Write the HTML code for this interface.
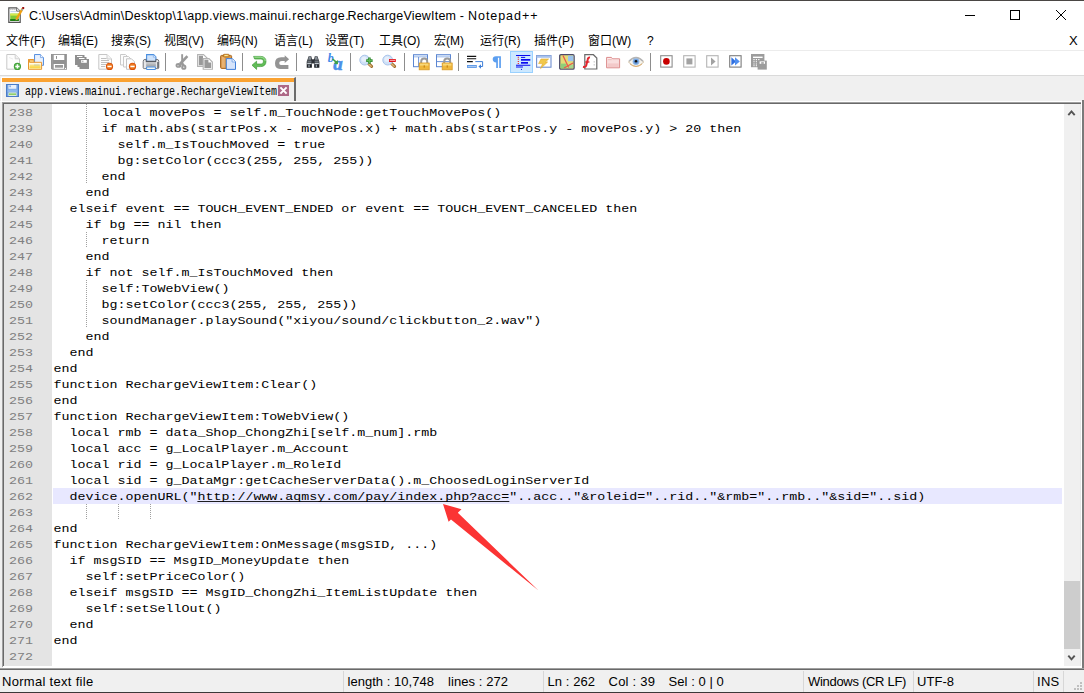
<!DOCTYPE html>
<html lang="zh">
<head>
<meta charset="utf-8">
<title>Notepad++</title>
<style>
*{box-sizing:border-box;margin:0;padding:0}
html,body{width:1084px;height:693px;overflow:hidden;background:#f0f0f0}
body{position:relative;font-family:"Liberation Sans","Noto Sans CJK SC",sans-serif;font-size:12px;color:#000}
.abs,.ic,.sep,.act{position:absolute}
#topline{left:0;top:0;width:1084px;height:1px;background:#4a4644}
#title{left:0;top:1px;width:1084px;height:29px;background:#fff}
#ttext span{position:absolute;top:0;white-space:pre}
#ttext{left:29px;top:8px;height:16px;line-height:16px;font-size:12.5px;white-space:nowrap;letter-spacing:.37px}
#menu{left:0;top:30px;width:1084px;height:20px;background:#fff}
#menu span{position:absolute;top:3px;height:16px;line-height:16px;font-size:12px;white-space:nowrap}
#mline{left:0;top:50px;width:1084px;height:1px;background:#ececec}
#tool{left:0;top:51px;width:1084px;height:24px;background:#fff}
#tline{left:0;top:75px;width:1084px;height:1px;background:#dadada}
.ic{overflow:visible}
.sep{top:53px;width:1px;height:18px;background:#8d8d8d}
.act{left:510px;top:51px;width:23px;height:22px;background:#cce8ff;border:1px solid #99d1ff}
#tabbar{left:0;top:76px;width:1084px;height:25px;background:#f0f0f0}
#tab{left:1px;top:77px;width:295px;height:24px;background:#f0f0f0;border-left:1px solid #fff;border-top:1px solid #fff;border-right:2px solid #6b6b6b}
#tabor{left:2px;top:78px;width:292px;height:4px;background:#faa231}
#tabtx{left:25px;top:86px;height:16px;line-height:16px;font-family:"Liberation Mono",monospace;font-size:10px;white-space:nowrap;transform:scaleY(1.3);transform-origin:0 12px;color:#000}
#tabx{left:278px;top:85px;width:11px;height:11px;background:#ad6886}
#edwhite{left:0;top:101px;width:1084px;height:1px;background:#fff}
#ed{left:2px;top:102px;width:1080px;height:565px;border-top:1px solid #a0a0a0;border-left:1px solid #a0a0a0;background:#696969}
#edin{left:4px;top:104px;width:1060px;height:562px;background:#fff;overflow:hidden}
#margin{left:4px;top:104px;width:48px;height:562px;background:#e4e4e4}
.ln{position:absolute;left:0;width:1060px;height:16px;line-height:16px;font-family:"Liberation Mono",monospace;font-size:13.333px;white-space:pre;color:#000}
.ln.cur::before{content:"";position:absolute;left:49px;top:0;width:1009px;height:16px;background:#e8e8ff}
.no{position:absolute;left:5px;top:1px;font-weight:normal;color:#808080;transform:scaleY(.87);transform-origin:0 12px}
.tx{position:absolute;top:1px;margin-left:-.6px;transform:scaleY(.87);transform-origin:0 12px}
.tx u{text-decoration:underline;text-underline-offset:1px;text-decoration-skip-ink:none;text-decoration-thickness:1px}
.g{position:absolute;top:0;width:1px;height:16px;background-image:linear-gradient(#a0a0a0 50%,transparent 50%);background-size:1px 2px}
#sb{left:1064px;top:104px;width:17px;height:562px;background:#f0f0f0}
#thumb{left:1064px;top:581px;width:16px;height:68px;background:#cdcdcd}
#status{left:0;top:669px;width:1084px;height:24px;background:#f0f0f0;border-top:1px solid #696969}
.st{position:absolute;top:674px;height:16px;line-height:16px;font-size:13px;letter-spacing:.3px;white-space:nowrap}
.ss{position:absolute;top:671px;width:1px;height:21px;background:#d7d7d7}
#botline{left:0;top:692px;width:1084px;height:1px;background:#3c3838}
</style>
</head>
<body>
<div id="topline" class="abs"></div>
<div id="title" class="abs"></div>
<svg class="abs" style="left:8px;top:6px" width="17" height="18" viewBox="0 0 17 18"><path d="M.8 1.8H8.6L12.2 5.2V16.4H.8Z" fill="#fff" stroke="#555" stroke-width="1.2"/><path d="M8.6 1.8V5.2H12.2" fill="#eee" stroke="#666" stroke-width=".9"/><path d="M2.4 3.6H7.4" stroke="#999" stroke-width="1" stroke-dasharray="1 1"/><path d="M2.4 5.6H8" stroke="#b9cbe6" stroke-width=".9"/><rect x="2.2" y="7.6" width="8.6" height="7.4" fill="#7fc93a"/><rect x="2.2" y="7.6" width="8.6" height="2" fill="#d6e84c"/><rect x="2.2" y="13" width="8.6" height="2" fill="#1f7d14"/><path d="M14.6 2.6L8.2 13.6" stroke="#f0a010" stroke-width="2.2"/><path d="M7.6 14.6L8 12.6L9.6 13.4Z" fill="#c9a36a"/><rect x="14.2" y="1" width="2" height="2" fill="#9b1010"/><path d="M13.6 3.4L14.8 4.2" stroke="#7fa8e0" stroke-width="1.4"/></svg>
<div id="ttext" class="abs"><span style="letter-spacing:.3px">C:\Users\Admin\Desktop\1\app.views.mainui.</span><span style="left:263.3px;letter-spacing:.45px">recharge.</span><span style="left:318.6px;letter-spacing:.2px">RechargeViewItem</span><span style="left:427px"> - </span><span style="left:439px;letter-spacing:.95px">Notepad++</span></div>
<svg class="abs" style="left:960px;top:5px" width="112" height="20" viewBox="0 0 112 20"><path d="M5 10.5H15" stroke="#000" stroke-width="1"/><rect x="50.5" y="5.5" width="9" height="9" fill="none" stroke="#000" stroke-width="1"/><path d="M96 5L106 15M106 5L96 15" stroke="#000" stroke-width="1"/></svg>
<div id="menu" class="abs"><span style="left:6px">文件(F)</span><span style="left:58px">编辑(E)</span><span style="left:111px">搜索(S)</span><span style="left:164px">视图(V)</span><span style="left:217px">编码(N)</span><span style="left:274px">语言(L)</span><span style="left:325px">设置(T)</span><span style="left:379px">工具(O)</span><span style="left:434px">宏(M)</span><span style="left:480px">运行(R)</span><span style="left:534px">插件(P)</span><span style="left:588px">窗口(W)</span><span style="left:647px">?</span><span style="left:1069px;font-size:13px">X</span></div>
<div id="mline" class="abs"></div>
<div id="tool" class="abs"></div>
<div id="tline" class="abs"></div>
<div class="act"></div><i class="sep" style="left:165px"></i><i class="sep" style="left:242px"></i><i class="sep" style="left:296px"></i><i class="sep" style="left:350px"></i><i class="sep" style="left:404px"></i><i class="sep" style="left:458px"></i><i class="sep" style="left:650px"></i><svg class="ic" style="left:5px;top:54px" width="16" height="16" viewBox="0 0 16 16"><path d="M1.8 .5H10.2L14.5 4.8V15.2H1.8Z" fill="#fdfdfd" stroke="#c9c9c9"/><path d="M10.2 .5V4.8H14.5" fill="#f1f1f1" stroke="#d2d2d2"/><path d="M4 3.5L8 5" stroke="#ececec"/><circle cx="12.4" cy="12.4" r="3.6" fill="#3d9b35"/><circle cx="12.4" cy="12.4" r="2.8" fill="#55b54a"/><path d="M12.4 10.3V14.5M10.3 12.4H14.5" stroke="#fff" stroke-width="1.5"/></svg>
<svg class="ic" style="left:28px;top:54px" width="16" height="16" viewBox="0 0 16 16"><path d="M6.5 .5H12.5L15.5 3.5V11.3H6.5Z" fill="#dbe8fb" stroke="#5b92e0"/><path d="M12.5 .5V3.5H15.5" fill="#f1f6fe" stroke="#7aa6e6" stroke-width=".8"/><path d="M7.6 1.6H11.6V4.4H14.4V10.2H7.6Z" fill="#e9f1fd"/><path d="M.5 5.5H5.8V9H.5Z" fill="#fbdc90" stroke="#e8962e"/><path d="M.5 15.3V5.5H1.5V8.3H13.6V15.3Z" fill="#fffae6" stroke="#e8962e"/><path d="M1.8 7L4.8 6.6L5.6 7.8" fill="none" stroke="#f3b65a" stroke-width="1"/><rect x="1.6" y="10.6" width="10.9" height="3.8" fill="#fbe27a"/><rect x="1.6" y="12.4" width="10.9" height="2" fill="#f9d84e"/><path d="M6 11H11.5" stroke="#b9c6a8" stroke-width=".8"/></svg>
<svg class="ic" style="left:51px;top:54px" width="16" height="16" viewBox="0 0 16 16"><path d="M0 0H15.9V15.7H1.2L0 14.8Z" fill="#929292"/><path d="M1.3 .2V14.6" stroke="#a8a8a8" stroke-width=".5"/><rect x="2.7" y=".9" width="10.6" height="5.1" fill="#fff"/><rect x="5" y="2" width="1" height="2.9" fill="#929292"/><rect x="2.7" y="10" width="10.4" height="4.8" fill="#fff"/><rect x="4" y="11" width="8" height="2.7" fill="#9a9a9a"/><rect x="14" y="13.9" width="1" height="1.1" fill="#fff"/></svg>
<svg class="ic" style="left:74px;top:54px" width="16" height="16" viewBox="0 0 16 16"><path d="M1 1H10.5V3H12.5V5H15V15H5.5V13H3.5V11H1Z" fill="#8f8f8f"/><rect x="3" y="2" width="5.5" height="1" fill="#fff"/><rect x="5" y="4" width="5.5" height="1" fill="#fff"/><rect x="7.2" y="6" width="5.6" height="2.8" fill="#fff"/><rect x="8.4" y="6.6" width=".9" height="1.6" fill="#8f8f8f"/></svg>
<svg class="ic" style="left:97px;top:54px" width="16" height="16" viewBox="0 0 16 16"><path d="M1.8 .5H10L14.5 5V15.2H1.8Z" fill="#fdfdfd" stroke="#c6c6c6"/><path d="M10 .5V5H14.5" fill="#f4f4f4" stroke="#cfcfcf"/><path d="M4 4.5H9.5M4 6.5H12M4 8.5H12M4 10.5H9M4 12.5H8" stroke="#b9b9b9" stroke-width=".9"/><circle cx="12.5" cy="12.4" r="3.6" fill="#d8500b"/><circle cx="12.5" cy="12.2" r="2.7" fill="#ee7a1f"/><rect x="10.4" y="11.7" width="4.2" height="1.5" fill="#fff"/></svg>
<svg class="ic" style="left:120px;top:54px" width="16" height="16" viewBox="0 0 16 16"><path d="M.5 .5H5.5L8 3V11H.5Z" fill="#fcfcfc" stroke="#cacaca"/><path d="M3.5 2.5H8.5L11 5V13H3.5Z" fill="#fcfcfc" stroke="#cacaca"/><path d="M6.5 4.8H11.5L14.5 7.8V15.3H6.5Z" fill="#fcfcfc" stroke="#c4c4c4"/><circle cx="12.5" cy="12.4" r="3.6" fill="#d8500b"/><circle cx="12.5" cy="12.2" r="2.7" fill="#ee7a1f"/><rect x="10.4" y="11.7" width="4.2" height="1.5" fill="#fff"/></svg>
<svg class="ic" style="left:143px;top:54px" width="16" height="16" viewBox="0 0 16 16"><path d="M3.6 .6H10.6L12.9 3V8H3.6Z" fill="#cfe3fb" stroke="#4a8fe0" stroke-width="1.1"/><path d="M10.4 .7V3.2H12.8" fill="#eef5fe" stroke="#7aa9e6" stroke-width=".7"/><path d="M2 5.4H3.1V7.2H12.9V5.4H14Q15.8 5.4 15.8 7.5V13.6Q15.8 14.6 14.8 14.6H1.2Q.2 14.6 .2 13.6V7.5Q.2 5.4 2 5.4Z" fill="#e6e7e9" stroke="#55585e" stroke-width=".8"/><path d="M2.8 7.7H13.2" stroke="#4a4d52" stroke-width="1"/><rect x="3.2" y="8.3" width="9.6" height="4.4" fill="#c2c4c7"/><rect x="3.2" y="10.4" width="9.6" height="2.3" fill="#a9acb0"/><path d="M14.9 8V14" stroke="#2e3034" stroke-width=".9"/><path d="M3.6 13H12.4V15.5H3.6Z" fill="#f4f9f6" stroke="#4a8fe0" stroke-width="1"/></svg>
<svg class="ic" style="left:174px;top:54px" width="16" height="16" viewBox="0 0 16 16"><path d="M7.2 .2H9.1V10H7.2Z" fill="#999"/><path d="M13.4 2.2L6 10" stroke="#999" stroke-width="2.6"/><ellipse cx="4.5" cy="11.4" rx="2.9" ry="2.4" fill="#999"/><circle cx="4" cy="11.7" r=".6" fill="#e6e6e6"/><path d="M7.4 8.6L9.6 11.8" stroke="#999" stroke-width="2.6"/><circle cx="9.8" cy="13.2" r="1.6" fill="#fff" stroke="#999" stroke-width="2"/></svg>
<svg class="ic" style="left:197px;top:54px" width="16" height="16" viewBox="0 0 16 16"><path d="M.6 .6H6.5L10.6 4.5V12.4H.6Z" fill="#fff" stroke="#b3b3b3" stroke-width="1.1"/><path d="M1.8 1.8H6V5H9.4V11.2H1.8Z" fill="#999"/><path d="M6.2 4.6H12L15.4 8V15.2H6.2Z" fill="#fff" stroke="#b3b3b3" stroke-width="1.1"/><path d="M7.4 5.8H11.4V8.6H14.2V14H7.4Z" fill="#999"/></svg>
<svg class="ic" style="left:220px;top:54px" width="16" height="16" viewBox="0 0 16 16"><rect x=".6" y="1.4" width="11" height="13" rx="1" fill="#d99a4e" stroke="#a9651c" stroke-width="1"/><rect x="1.8" y="3" width="3" height="10.6" fill="#e8b272"/><rect x="3.4" y=".3" width="5.6" height="2.6" rx=".6" fill="#f2c14e" stroke="#a9651c" stroke-width=".8"/><rect x="4.8" y="1" width="2.8" height="1" fill="#fbe7a0"/><path d="M6.3 4.6H12.3L15.5 7.8V15.4H6.3Z" fill="#d6e4fb" stroke="#3f7fd8" stroke-width="1"/><path d="M12.1 4.8V8H15.4" fill="#f1f6fe" stroke="#6f9fe3" stroke-width=".8"/></svg>
<svg class="ic" style="left:251px;top:54px" width="16" height="16" viewBox="0 0 16 16"><path d="M2.6 2.4H9.6C13.2 2.4 15 4.4 15 7.4C15 10.4 13.2 12.6 9.6 12.6H5.6V15.4L1 11.2L5.6 7.2V10H9.6C11.4 10 12.4 9 12.4 7.4C12.4 5.8 11.4 5 9.6 5H3.6Z" fill="#62bd57" stroke="#3f9c3b" stroke-width=".7"/><path d="M3.4 3.2H9.6C12.6 3.2 14 4.8 14.2 7" fill="none" stroke="#b2e6a8" stroke-width=".8"/></svg>
<svg class="ic" style="left:274px;top:54px" width="16" height="16" viewBox="0 0 16 16"><path d="M10.7 1.3L15.1 5.2L10.7 9.1V7.1H7.8Q5.2 7.1 5.2 9.1Q5.2 11 7 11H14.4V14.9H6Q1 14.9 1 9.3Q1 3.3 7.2 3.3H10.7Z" fill="#949494"/></svg>
<svg class="ic" style="left:305px;top:54px" width="16" height="16" viewBox="0 0 16 16"><g transform="translate(1,.2) scale(.88,1)"><path d="M3 2H6L6.8 5H9.2L10 2H13L15.2 7.6V13.6H9.3V9.2H6.7V13.6H.8V7.6Z" fill="#2c3035"/><path d="M3.4 2.4H5.4L5.9 5.6H2.4Z" fill="#8a9199"/><path d="M10.6 2.4H12.6L13.6 5.6H10.1Z" fill="#8a9199"/><path d="M1.6 6.4H6.2V8H1.6ZM9.8 6.4H14.4V8H9.8Z" fill="#6c737b"/><rect x="1.4" y="8.6" width="4.8" height="1.4" fill="#c3cad1"/><rect x="9.8" y="8.6" width="4.8" height="1.4" fill="#c3cad1"/><rect x="1.6" y="10.4" width="4.4" height="2.6" fill="#1d2024"/><rect x="10" y="10.4" width="4.4" height="2.6" fill="#1d2024"/><rect x="2.6" y="10.4" width="1.6" height="2.6" fill="#8d97a1"/><rect x="11" y="10.4" width="1.6" height="2.6" fill="#8d97a1"/></g></svg>
<svg class="ic" style="left:328px;top:54px" width="16" height="16" viewBox="0 0 16 16"><text x="-.2" y="8.2" font-family="Liberation Serif,serif" font-style="italic" font-weight="bold" font-size="12" fill="#3f88e8">b</text><text x="5.2" y="15.6" font-family="Liberation Serif,serif" font-style="italic" font-weight="bold" font-size="19" fill="#4a90e8" stroke="#4a90e8" stroke-width=".5">a</text><path d="M4.6 5L8.2 8.2" stroke="#3fa046" stroke-width="1.6"/><path d="M9.8 6L10 10.2L5.6 9.6Z" fill="#3fa046"/></svg>
<svg class="ic" style="left:359px;top:54px" width="16" height="16" viewBox="0 0 16 16"><path d="M8.6 8.6L12.6 12.4" stroke="#a06e2e" stroke-width="3" stroke-linecap="round"/><path d="M9.6 9.8L12.2 12.2" stroke="#e0b878" stroke-width="1.3" stroke-linecap="round"/><circle cx="5.7" cy="6.1" r="4.9" fill="#cfe0f7" stroke="#a9c4ea" stroke-width="1"/><circle cx="5" cy="5.2" r="2.6" fill="#e6effb"/><path d="M10.4 3.4V9.8M7.2 6.6H13.6" stroke="#2f8b2f" stroke-width="2.6"/><path d="M10.4 4.2V9M8 6.6H12.8" stroke="#63b85a" stroke-width="1.2"/></svg>
<svg class="ic" style="left:382px;top:54px" width="16" height="16" viewBox="0 0 16 16"><path d="M8.6 8.6L12.6 12.4" stroke="#a06e2e" stroke-width="3" stroke-linecap="round"/><path d="M9.6 9.8L12.2 12.2" stroke="#e0b878" stroke-width="1.3" stroke-linecap="round"/><circle cx="5.7" cy="6.1" r="4.9" fill="#cfe0f7" stroke="#a9c4ea" stroke-width="1"/><circle cx="5" cy="5.2" r="2.6" fill="#e6effb"/><rect x="7" y="5" width="6.8" height="3" fill="#e3141c"/><rect x="7.8" y="5.8" width="5.2" height="1.2" fill="#f59a9e"/></svg>
<svg class="ic" style="left:413px;top:54px" width="16" height="16" viewBox="0 0 16 16"><rect x=".5" y=".7" width="14" height="12" fill="#fff" stroke="#5b86d2" stroke-width="1"/><rect x="1" y="1.2" width="13" height="1.6" fill="#c4d6f3"/><path d="M1 3H14" stroke="#8fb0e6" stroke-width=".6"/><path d="M5.6 3V12.5" stroke="#5b86d2" stroke-width=".9"/><path d="M8.2 9.5V7.6Q8.2 4.6 11.2 4.6Q14.2 4.6 14.2 7.6V9.5" fill="none" stroke="#9b9b9b" stroke-width="2"/><rect x="6.2" y="9" width="10" height="6.8" fill="#f0b73c" stroke="#d99a26" stroke-width=".8"/><rect x="7" y="9.6" width="8.4" height="2" fill="#f9d777"/><rect x="10.6" y="11.4" width="1.4" height="2.2" fill="#c98a1c"/></svg>
<svg class="ic" style="left:436px;top:54px" width="16" height="16" viewBox="0 0 16 16"><rect x=".5" y=".7" width="14" height="12" fill="#fff" stroke="#5b86d2" stroke-width="1"/><rect x="1" y="1.2" width="13" height="1.6" fill="#c4d6f3"/><path d="M1 3H14" stroke="#8fb0e6" stroke-width=".6"/><path d="M1 7.6H14" stroke="#5b86d2" stroke-width=".9"/><path d="M8.2 9.5V7.6Q8.2 4.6 11.2 4.6Q14.2 4.6 14.2 7.6V9.5" fill="none" stroke="#9b9b9b" stroke-width="2"/><rect x="6.2" y="9" width="10" height="6.8" fill="#f0b73c" stroke="#d99a26" stroke-width=".8"/><rect x="7" y="9.6" width="8.4" height="2" fill="#f9d777"/><rect x="10.6" y="11.4" width="1.4" height="2.2" fill="#c98a1c"/></svg>
<svg class="ic" style="left:467px;top:54px" width="16" height="16" viewBox="0 0 16 16"><path d="M0 2.4H9.2M0 4.8H9.2M0 7.6H5.8" stroke="#111" stroke-width="1.1"/><rect x="0" y="11" width="9.8" height="2.9" fill="#5b97e6"/><rect x=".8" y="11.9" width="8.2" height="1.1" fill="#a9c8f3"/><path d="M8.3 7.6H15.6V12.5H13.6" fill="none" stroke="#3f7fd8" stroke-width="1"/><path d="M11.4 12.5L14 10.3V14.7Z" fill="#3f7fd8"/></svg>
<svg class="ic" style="left:490px;top:54px" width="16" height="16" viewBox="0 0 16 16"><path d="M6 2.3H10.9V13.9H9.2V3.7H7.9V13.9H6.2V8.4Q2.7 8.4 2.7 5.3Q2.7 2.3 6 2.3Z" fill="#5c9ff0"/></svg>
<svg class="ic" style="left:513px;top:53px" width="16" height="16" viewBox="0 0 16 16"><path d="M3 2.5H17.3M3 12.2H17.3M3 14H9.9" stroke="#0a0af0" stroke-width="1.1"/><path d="M8 4.4H12.2" stroke="#0a0af0" stroke-width="1"/><rect x="8" y="6" width="9.3" height="1.7" fill="#0a0af0"/><rect x="8" y="9" width="7" height="1.7" fill="#0a0af0"/><path d="M5.3 3.7V11" stroke="#f01414" stroke-width="1.1" stroke-dasharray="1 1.1"/><rect x="8" y="15.9" width="1" height="1" fill="#0a0af0"/></svg>
<svg class="ic" style="left:536px;top:54px" width="16" height="16" viewBox="0 0 16 16"><rect x=".6" y="1.6" width="14.4" height="11.6" fill="#fff" stroke="#6f8fd0" stroke-width="1.1"/><rect x=".6" y="1.6" width="14.4" height="2.2" fill="#a9c2ec"/><path d="M5 5H12.6L9.4 8H11.6L4.6 14.6L6.6 9.6H2.6Z" fill="#f2c84a" stroke="#e0a92a" stroke-width=".6"/></svg>
<svg class="ic" style="left:559px;top:54px" width="16" height="16" viewBox="0 0 16 16"><rect x=".7" y=".7" width="14.4" height="14.4" rx="1.2" fill="#e3dc78" stroke="#4c4a6a" stroke-width="1.3"/><rect x="9" y="1.6" width="5.4" height="5.6" fill="#9cc3ee"/><rect x="1.6" y="9.6" width="6" height="4.8" fill="#8fcf7a"/><rect x="8.6" y="10.6" width="5.6" height="3.6" fill="#a9d88e"/><path d="M4 1.6L9.6 13.6M14 9L5 14" stroke="#ec5a4a" stroke-width="1.3"/></svg>
<svg class="ic" style="left:582px;top:54px" width="16" height="16" viewBox="0 0 16 16"><path d="M2.8 .7H11.4L14.8 4V15H2.8Z" fill="#fff" stroke="#6a6a6a" stroke-width="1.2"/><path d="M12.2 7V13" stroke="#c5c5c5" stroke-width="1" stroke-dasharray="1.6 1.4"/><path d="M8 3.6Q6 3.2 5.6 6L4.2 11.6Q3.8 13.4 1 12.8" fill="none" stroke="#e3262e" stroke-width="2"/><path d="M3.2 8H7.4" stroke="#e3262e" stroke-width="1.4"/></svg>
<svg class="ic" style="left:605px;top:54px" width="16" height="16" viewBox="0 0 16 16"><path d="M1.6 3.4H6.4L7.4 4.8H14.6V13.8H1.6Z" fill="#fbeaea" stroke="#dc8a8a" stroke-width="1"/><path d="M2.4 6.6H13.8V13H2.4Z" fill="#f3c9c9"/><path d="M2.4 6.6H13.8V9.4H2.4Z" fill="#f9dede"/><path d="M2.8 5.6H6.8" stroke="#eeb0b0" stroke-width=".8"/></svg>
<svg class="ic" style="left:628px;top:54px" width="16" height="16" viewBox="0 0 16 16"><path d="M.4 8Q8 -1 15.8 8Q8 16.6 .4 8Z" fill="#f6f4ee" stroke="#d3c3a8" stroke-width="1"/><path d="M1 7.2Q8 -.4 15 7.2" fill="none" stroke="#b5b5b5" stroke-width="1.5"/><circle cx="8" cy="7.6" r="3.4" fill="#8ab4e6"/><circle cx="8" cy="7.6" r="2.3" fill="#5f93d6"/><circle cx="8" cy="7.2" r="1.2" fill="#111"/><path d="M2 10Q8 15.2 14 10" fill="none" stroke="#dcae72" stroke-width=".9"/></svg>
<svg class="ic" style="left:659px;top:54px" width="16" height="16" viewBox="0 0 16 16"><rect x="1.7" y="1.7" width="11.4" height="11.4" fill="#fff" stroke="#8e8e8e" stroke-width="1.1"/><circle cx="7.4" cy="7.4" r="3.3" fill="#c80000"/></svg>
<svg class="ic" style="left:682px;top:54px" width="16" height="16" viewBox="0 0 16 16"><rect x="1.7" y="1.7" width="11.4" height="11.4" fill="#fff" stroke="#b5b5b5" stroke-width="1.1"/><rect x="4.4" y="4.4" width="6" height="6" fill="#a2a2a2"/></svg>
<svg class="ic" style="left:705px;top:54px" width="16" height="16" viewBox="0 0 16 16"><rect x="1.7" y="1.7" width="11.4" height="11.4" fill="#fff" stroke="#b5b5b5" stroke-width="1.1"/><path d="M6 3.4L10.6 7.4L6 11.4Z" fill="#a2a2a2"/></svg>
<svg class="ic" style="left:728px;top:54px" width="16" height="16" viewBox="0 0 16 16"><rect x="1.7" y="1.7" width="11.4" height="11.4" fill="#fff" stroke="#7c7c7c" stroke-width="1.1"/><path d="M3.4 3.2L8 7.4L3.4 11.6Z" fill="#2f6fe0"/><path d="M7 3.2L11.8 7.4L7 11.6Z" fill="#4f8ff0"/></svg>
<svg class="ic" style="left:751px;top:54px" width="16" height="16" viewBox="0 0 16 16"><rect x="0" y="0" width="13.4" height="13.2" fill="#9c9c9c"/><rect x="2" y="2.6" width="9.6" height="1.4" fill="#fff"/><path d="M2.4 5.6H3.6M4.8 5.6H6M7.2 5.6H8.4M2.4 7.8H3.6M4.8 7.8H6M2.4 10H3.6M4.8 10H6M2.4 11.8H3.6M4.8 11.8H6" stroke="#fff" stroke-width="1.1"/><rect x="6.6" y="6.6" width="9.2" height="9" fill="#9c9c9c"/><rect x="8.6" y="7.4" width="5.4" height="2.4" fill="#fff"/><rect x="10.2" y="8.2" width="2.6" height="1.6" fill="#9c9c9c"/></svg>
<div id="tabbar" class="abs"></div>
<div id="tab" class="abs"></div>
<div id="tabor" class="abs"></div>
<svg class="abs" style="left:6px;top:84px" width="13" height="13" viewBox="0 0 13 13"><rect x=".5" y=".5" width="12" height="12" fill="#6f9fe0" stroke="#4a7cc7"/><rect x="2.4" y="1" width="8" height="3.8" fill="#e8f0fb"/><rect x="3.6" y="1.4" width="1" height="1.8" fill="#4f86d6"/><rect x="1.6" y="5.4" width="9.8" height="2.6" fill="#8fb8ee"/><rect x="2.4" y="8.4" width="8.2" height="3.6" fill="#dfeeda"/><rect x="3" y="9.4" width="7" height="1.6" fill="#8fcf6a"/></svg>
<div id="tabtx" class="abs">app.views.mainui.recharge.RechargeViewItem</div>
<div id="tabx" class="abs"><svg width="11" height="11" viewBox="0 0 11 11" style="display:block"><path d="M2.4 2.4L8.6 8.6M8.6 2.4L2.4 8.6" stroke="#fff" stroke-width="2"/></svg></div>
<div id="edwhite" class="abs"></div>
<div id="ed" class="abs"></div>
<div id="edin" class="abs">
<div class="abs" style="left:0;top:0;width:48px;height:562px;background:#e4e4e4"></div>
<div class="ln" style="top:0px"><b class="no">238</b><i class="g" style="left:82px"></i><span class="tx" style="left:98px">local movePos = self.m_TouchNode:getTouchMovePos()</span></div>
<div class="ln" style="top:16px"><b class="no">239</b><i class="g" style="left:82px"></i><span class="tx" style="left:98px">if math.abs(startPos.x - movePos.x) + math.abs(startPos.y - movePos.y) &gt; 20 then</span></div>
<div class="ln" style="top:32px"><b class="no">240</b><i class="g" style="left:82px"></i><span class="tx" style="left:114px">self.m_IsTouchMoved = true</span></div>
<div class="ln" style="top:48px"><b class="no">241</b><i class="g" style="left:82px"></i><span class="tx" style="left:114px">bg:setColor(ccc3(255, 255, 255))</span></div>
<div class="ln" style="top:64px"><b class="no">242</b><i class="g" style="left:82px"></i><span class="tx" style="left:98px">end</span></div>
<div class="ln" style="top:80px"><b class="no">243</b><span class="tx" style="left:82px">end</span></div>
<div class="ln" style="top:96px"><b class="no">244</b><span class="tx" style="left:66px">elseif event == TOUCH_EVENT_ENDED or event == TOUCH_EVENT_CANCELED then</span></div>
<div class="ln" style="top:112px"><b class="no">245</b><span class="tx" style="left:82px">if bg == nil then</span></div>
<div class="ln" style="top:128px"><b class="no">246</b><i class="g" style="left:82px"></i><span class="tx" style="left:98px">return</span></div>
<div class="ln" style="top:144px"><b class="no">247</b><span class="tx" style="left:82px">end</span></div>
<div class="ln" style="top:160px"><b class="no">248</b><span class="tx" style="left:82px">if not self.m_IsTouchMoved then</span></div>
<div class="ln" style="top:176px"><b class="no">249</b><i class="g" style="left:82px"></i><span class="tx" style="left:98px">self:ToWebView()</span></div>
<div class="ln" style="top:192px"><b class="no">250</b><i class="g" style="left:82px"></i><span class="tx" style="left:98px">bg:setColor(ccc3(255, 255, 255))</span></div>
<div class="ln" style="top:208px"><b class="no">251</b><i class="g" style="left:82px"></i><span class="tx" style="left:98px">soundManager.playSound(&quot;xiyou/sound/clickbutton_2.wav&quot;)</span></div>
<div class="ln" style="top:224px"><b class="no">252</b><span class="tx" style="left:82px">end</span></div>
<div class="ln" style="top:240px"><b class="no">253</b><span class="tx" style="left:66px">end</span></div>
<div class="ln" style="top:256px"><b class="no">254</b><span class="tx" style="left:50px">end</span></div>
<div class="ln" style="top:272px"><b class="no">255</b><span class="tx" style="left:50px">function RechargeViewItem:Clear()</span></div>
<div class="ln" style="top:288px"><b class="no">256</b><span class="tx" style="left:50px">end</span></div>
<div class="ln" style="top:304px"><b class="no">257</b><span class="tx" style="left:50px">function RechargeViewItem:ToWebView()</span></div>
<div class="ln" style="top:320px"><b class="no">258</b><span class="tx" style="left:66px">local rmb = data_Shop_ChongZhi[self.m_num].rmb</span></div>
<div class="ln" style="top:336px"><b class="no">259</b><span class="tx" style="left:66px">local acc = g_LocalPlayer.m_Account</span></div>
<div class="ln" style="top:352px"><b class="no">260</b><span class="tx" style="left:66px">local rid = g_LocalPlayer.m_RoleId</span></div>
<div class="ln" style="top:368px"><b class="no">261</b><span class="tx" style="left:66px">local sid = g_DataMgr:getCacheServerData().m_ChoosedLoginServerId</span></div>
<div class="ln cur" style="top:384px"><b class="no">262</b><span class="tx" style="left:66px">device.openURL(&quot;<u>http://www.aqmsy.com/pay/index.php?acc=</u>&quot;..acc..&quot;&amp;roleid=&quot;..rid..&quot;&amp;rmb=&quot;..rmb..&quot;&amp;sid=&quot;..sid)</span></div>
<div class="ln" style="top:400px"><b class="no">263</b><i class="g" style="left:82px"></i><i class="g" style="left:114px"></i><i class="g" style="left:146px"></i><span class="tx" style="left:50px"></span></div>
<div class="ln" style="top:416px"><b class="no">264</b><span class="tx" style="left:50px">end</span></div>
<div class="ln" style="top:432px"><b class="no">265</b><span class="tx" style="left:50px">function RechargeViewItem:OnMessage(msgSID, ...)</span></div>
<div class="ln" style="top:448px"><b class="no">266</b><span class="tx" style="left:66px">if msgSID == MsgID_MoneyUpdate then</span></div>
<div class="ln" style="top:464px"><b class="no">267</b><span class="tx" style="left:82px">self:setPriceColor()</span></div>
<div class="ln" style="top:480px"><b class="no">268</b><span class="tx" style="left:66px">elseif msgSID == MsgID_ChongZhi_ItemListUpdate then</span></div>
<div class="ln" style="top:496px"><b class="no">269</b><span class="tx" style="left:82px">self:setSellOut()</span></div>
<div class="ln" style="top:512px"><b class="no">270</b><span class="tx" style="left:66px">end</span></div>
<div class="ln" style="top:528px"><b class="no">271</b><span class="tx" style="left:50px">end</span></div>
<div class="ln" style="top:544px"><b class="no">272</b><span class="tx" style="left:50px"></span></div>
</div>
<div id="sb" class="abs"></div>
<div id="thumb" class="abs"></div>
<svg class="abs" style="left:1064px;top:104px" width="16" height="17" viewBox="0 0 16 17"><path d="M4.3 11.2L7.5 7.4L10.7 11.2" fill="none" stroke="#555" stroke-width="1.9"/></svg>
<svg class="abs" style="left:1064px;top:649px" width="16" height="17" viewBox="0 0 16 17"><path d="M4.3 6.6L7.5 10.4L10.7 6.6" fill="none" stroke="#555" stroke-width="1.9"/></svg>
<div class="abs" style="left:1080px;top:104px;width:1px;height:562px;background:#e6e6e6"></div><div class="abs" style="left:1081px;top:102px;width:1px;height:566px;background:#fff"></div>
<div class="abs" style="left:1082px;top:100px;width:2px;height:568px;background:#7a7a7a"></div>
<div class="abs" style="left:3px;top:666px;width:1079px;height:2px;background:#fff"></div>
<div class="abs" style="left:0;top:668px;width:1084px;height:1px;background:#a0a0a0"></div>
<svg class="abs" style="left:430px;top:498px" width="120" height="100" viewBox="430 498 120 100"><path d="M443 504L461.5 509.3L457.8 512.8L538.5 590.5L451 519.6L448.6 521.8Z" fill="#fb3434"/></svg>
<div id="status" class="abs"></div>
<span class="st" style="left:2px">Normal text file</span>
<span class="st" style="left:347.5px;letter-spacing:.03px">length : 10,748</span><span class="st" style="left:448px;letter-spacing:.08px">lines : 272</span>
<span class="st" style="left:547.5px;letter-spacing:.08px">Ln : 262</span><span class="st" style="left:608.5px;letter-spacing:.25px">Col : 39</span><span class="st" style="left:668.5px;letter-spacing:.06px">Sel : 0 | 0</span>
<span class="st" style="left:808px;letter-spacing:-.3px">Windows (CR LF)</span>
<span class="st" style="left:917px;letter-spacing:.06px">UTF-8</span>
<span class="st" style="left:1037px;letter-spacing:.3px">INS</span>
<i class="ss" style="left:343px"></i><i class="ss" style="left:543px"></i><i class="ss" style="left:803px"></i><i class="ss" style="left:913px"></i><i class="ss" style="left:1033px"></i><i class="ss" style="left:1063px"></i>
<svg class="abs" style="left:1072px;top:680px" width="12" height="12" viewBox="0 0 12 12"><path d="M8 2H10V4H8ZM5 5H7V7H5ZM8 5H10V7H8ZM2 8H4V10H2ZM5 8H7V10H5ZM8 8H10V10H8Z" fill="#bfbfbf"/></svg>
<div id="botline" class="abs"></div>
</body>
</html>
